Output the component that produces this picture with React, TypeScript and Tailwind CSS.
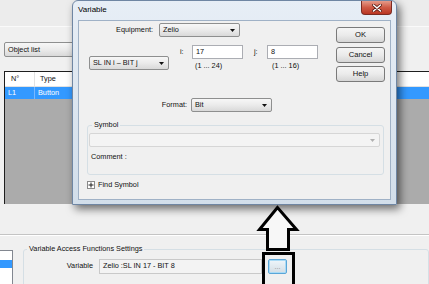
import React from "react";

function Caret({ color = "#111" }: { color?: string }) {
  return (
    <svg width="5" height="3" viewBox="0 0 5 3" className="shrink-0">
      <path d="M0 0H5L2.5 3Z" fill={color} />
    </svg>
  );
}

function Combo({
  text,
  className = "",
  disabled = false,
}: {
  text: string;
  className?: string;
  disabled?: boolean;
}) {
  return (
    <div
      className={`flex shrink-0 items-center justify-between rounded-[2px] border pl-[3px] pr-[4px] ${
        disabled
          ? "border-[#d6d6d6] bg-[#f4f4f4]"
          : "border-[#8e8f8f] bg-gradient-to-b from-[#f7f7f7] via-[#ebebeb] to-[#d9d9d9]"
      } ${className}`}
    >
      <span className="leading-none">{text}</span>
      <Caret color={disabled ? "#b0b0b0" : "#111"} />
    </div>
  );
}

function Btn({ label }: { label: string }) {
  return (
    <div className="flex h-[16px] shrink-0 items-center justify-center rounded-[3px] border border-[#7a7a7a] bg-gradient-to-b from-[#f5f5f5] via-[#ebebeb] to-[#d6d6d6] text-[7.6px] leading-none">
      {label}
    </div>
  );
}

export default function App() {
  return (
    <div className="relative h-[284px] w-[429px] overflow-hidden bg-[#f0f0f0] font-['Liberation_Sans',Arial,sans-serif] text-[7.3px] text-[#111]">
      {/* Background application */}
      <div className="flex h-full flex-col">
        <div className="h-[27px] shrink-0 border-b border-[#fafafa] bg-[#ececec]" />
        <div className="shrink-0 pl-[4px] pt-[15px]">
          <Combo text="Object list" className="h-[15px] w-[140px]" />
        </div>
        <div className="ml-[4px] mt-[14px] grid h-[133px] shrink-0 grid-rows-[15px_12px_1fr] border-l border-t border-[#1e1e1e] bg-[#ababab]">
          <div className="flex items-center border-b border-[#e2e2e2] bg-white">
            <div className="flex h-full w-[30px] items-center border-r border-[#e2e2e2] pl-[6px]">N°</div>
            <div className="pl-[5px]">Type</div>
          </div>
          <div className="flex items-center bg-[#3399ff] text-white">
            <div className="flex h-full w-[30px] items-center border-r border-[#78b8ff] pl-[3px]">L1</div>
            <div className="pl-[3px]">Button</div>
          </div>
          <div className="bg-[#ababab]" />
        </div>
        <div className="mt-[30px] h-[2px] shrink-0 border-b border-t border-b-white border-t-[#c4c4c4]" />
        <div className="flex flex-1 items-start">
          <div className="mt-[14px] h-[40px] w-[13px] shrink-0 border-r border-t border-[#828790] bg-white pt-[9px]">
            <div className="h-[8px] bg-[#3399ff]" />
          </div>
          <fieldset className="ml-[10px] mt-[9px] h-[60px] flex-1 rounded-[3px] border border-[#d5dfe5]">
            <legend className="ml-[3px] px-[2px] leading-[8px]">Variable Access Functions Settings</legend>
            <div className="mt-[6px] flex items-center">
              <div className="w-[69px] text-right">Variable</div>
              <div className="ml-[6px] flex h-[15px] w-[163px] items-center border border-[#c9c9c9] bg-[#f3f3f3] pl-[3px]">
                Zelio :SL IN 17 - BIT 8
              </div>
              <div className="ml-[6px] flex h-[15px] w-[19px] items-center justify-center rounded-[2px] border border-[#5aa6d8] bg-gradient-to-b from-[#eef6fb] to-[#d3dde4] shadow-[inset_0_0_0_1px_#a9dbf6] text-[7px] leading-none text-[#8a8a8a]">
                ...
              </div>
            </div>
          </fieldset>
        </div>
      </div>

      {/* Dialog window */}
      <div className="absolute left-[72px] top-0 flex h-[205px] w-[325px] flex-col rounded-t-[6px] border border-[#6f86a3] bg-gradient-to-b from-[#e7eef6] to-[#d2deea] px-[5px] pb-[4px] shadow-[3px_4px_8px_rgba(0,0,0,0.55)]">
        <div className="flex h-[19px] shrink-0 items-start justify-between">
          <div className="mt-[5px] text-[8px] leading-none text-black">Variable</div>
          <div className="mr-[-1px] flex h-[14px] w-[31px] items-center justify-center rounded-b-[4px] border border-t-0 border-[#7b2b22] bg-gradient-to-b from-[#e59b8a] via-[#cf5a45] to-[#b93522]">
            <svg width="10" height="8" viewBox="0 0 10 8">
              <path d="M1.5 1L8.5 7M8.5 1L1.5 7" stroke="#5a1a12" strokeWidth="3" strokeLinecap="round" />
              <path d="M1.5 1L8.5 7M8.5 1L1.5 7" stroke="#ffffff" strokeWidth="1.6" strokeLinecap="round" />
            </svg>
          </div>
        </div>
        <div className="flex flex-1 flex-col border border-[#9fb1c6] bg-[#f0f0f0]">
          {/* top section */}
          <div className="flex h-[92px] shrink-0">
            <div className="flex flex-1 flex-col">
              <div className="mt-[2px] flex h-[14px] items-center">
                <div className="w-[74px] text-right">Equipment:</div>
                <Combo text="Zelio" className="ml-[6px] h-[14px] w-[81px]" />
              </div>
              <div className="mt-[8px] flex h-[26px] items-start">
                <Combo text="SL IN i – BIT j" className="ml-[10px] mt-[11px] h-[14px] w-[80px]" />
                <div className="ml-[11px] flex h-[14px] w-[12px] items-center">i:</div>
                <div className="flex flex-col">
                  <div className="flex h-[14px] w-[51px] items-center border border-[#abadb3] bg-white pl-[3px]">17</div>
                  <div className="mt-[3px] pl-[3px] leading-[8px]">(1 ... 24)</div>
                </div>
                <div className="ml-[11px] flex h-[14px] w-[13px] items-center">j:</div>
                <div className="flex flex-col">
                  <div className="flex h-[14px] w-[51px] items-center border border-[#abadb3] bg-white pl-[3px]">8</div>
                  <div className="mt-[3px] pl-[5px] leading-[8px]">(1 ... 16)</div>
                </div>
              </div>
              <div className="mt-[27px] flex h-[14px] items-center">
                <div className="w-[108px] text-right">Format:</div>
                <Combo text="Bit" className="ml-[4px] h-[14px] w-[81px]" />
              </div>
            </div>
            <div className="mr-[5px] flex w-[49px] flex-col gap-[3.5px] pt-[6px]">
              <Btn label="OK" />
              <Btn label="Cancel" />
              <Btn label="Help" />
            </div>
          </div>
          {/* Symbol group */}
          <fieldset className="ml-[8px] mt-[8px] w-[297px] shrink-0 rounded-[3px] border border-[#d5dfe5] px-[1px] pb-[13px]">
            <legend className="ml-[3px] px-[2px] leading-[8px]">Symbol</legend>
            <Combo text="" disabled className="mt-[4px] h-[14px] w-[291px]" />
            <div className="ml-[2px] mt-[6px] leading-[8px]">Comment :</div>
          </fieldset>
          <div className="ml-[8px] mt-[6px] flex h-[8px] shrink-0 items-center">
            <div className="flex h-[8px] w-[8px] items-center justify-center border border-[#8a8a8a] bg-white">
              <svg width="6" height="6" viewBox="0 0 6 6">
                <path d="M3 0.5V5.5M0.5 3H5.5" stroke="#222" strokeWidth="1" />
              </svg>
            </div>
            <div className="ml-[3px] leading-none">Find Symbol</div>
          </div>
        </div>
      </div>

      {/* Annotation: arrow */}
      <svg className="absolute left-0 top-0" width="429" height="284" viewBox="0 0 429 284">
        <path
          d="M277.5 207.5L259.5 229.5H267.5V249.5H288.5V229.5H296.5Z"
          fill="#f7f7f7"
          stroke="#000"
          strokeWidth="3"
          strokeLinejoin="miter"
        />
      </svg>
      {/* Annotation: box around button */}
      <div className="absolute left-[262px] top-[252px] h-[36px] w-[33px] border-[3px] border-black" />
    </div>
  );
}
